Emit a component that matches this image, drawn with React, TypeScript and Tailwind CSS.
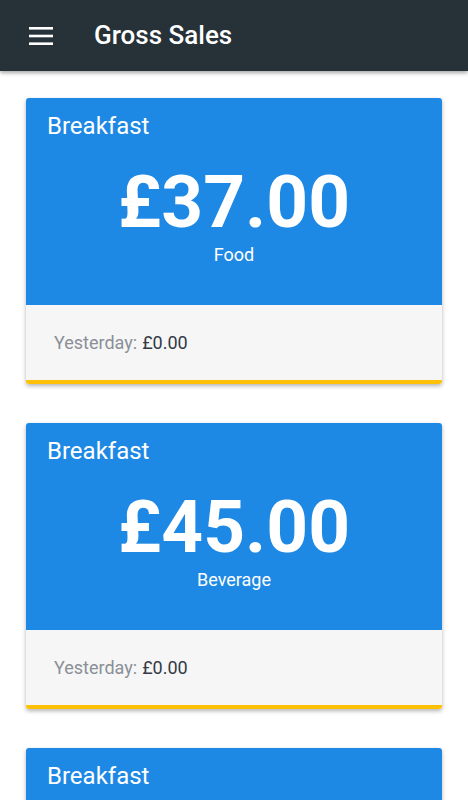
const cards = [
  { title: "Breakfast", amount: "£37.00", label: "Food", yesterday: "£0.00" },
  { title: "Breakfast", amount: "£45.00", label: "Beverage", yesterday: "£0.00" },
  { title: "Breakfast", amount: "£12.00", label: "Other", yesterday: "£0.00" },
]

const SalesCard = ({ card }: { card: (typeof cards)[number] }) => {
  return (
    <div className="rounded-[3px] overflow-hidden shadow-[0_2px_4px_rgba(0,0,0,0.3)]">
      <div className="bg-[#1e88e5] text-white pt-[14px] pb-[38px]">
        <div className="px-[21px] text-[24px] leading-[28px]">{card.title}</div>
        <div className="mt-[24px] text-center text-[73px] leading-[76px] font-bold">{card.amount}</div>
        <div className="mt-[3px] text-center text-[18px] leading-[24px]">{card.label}</div>
      </div>
      <div className="bg-[#f6f6f6] h-[75px] flex items-center px-[28px] text-[18px]">
        <span className="text-[#8a9096]">Yesterday:</span>
        <span className="ml-[5px] text-[#333a45]">{card.yesterday}</span>
      </div>
      <div className="h-[4px] bg-[#ffc107]" />
    </div>
  )
}

const App = () => {
  return (
    <div className="w-[468px] h-[800px] overflow-hidden bg-white" style={{ fontFamily: "Roboto, sans-serif" }}>
      <header className="h-[71px] bg-[#263238] flex items-center shadow-[0_2px_4px_rgba(0,0,0,0.35)] relative z-10">
        <button type="button" className="ml-[29px] w-[24px] h-[24px] flex items-center justify-center">
          <svg width="24" height="18" viewBox="0 0 24 18">
            <rect x="0" y="0" width="24" height="2.6" fill="#fff" />
            <rect x="0" y="7.7" width="24" height="2.6" fill="#fff" />
            <rect x="0" y="15.4" width="24" height="2.6" fill="#fff" />
          </svg>
        </button>
        <h1 className="ml-[41px] text-white text-[26px] font-medium">Gross Sales</h1>
      </header>

      <div className="px-[26px] pt-[27px] flex flex-col gap-[39px]">
        {cards.map((card, index) => (
          <SalesCard key={index} card={card} />
        ))}
      </div>
    </div>
  )
}

export default App
